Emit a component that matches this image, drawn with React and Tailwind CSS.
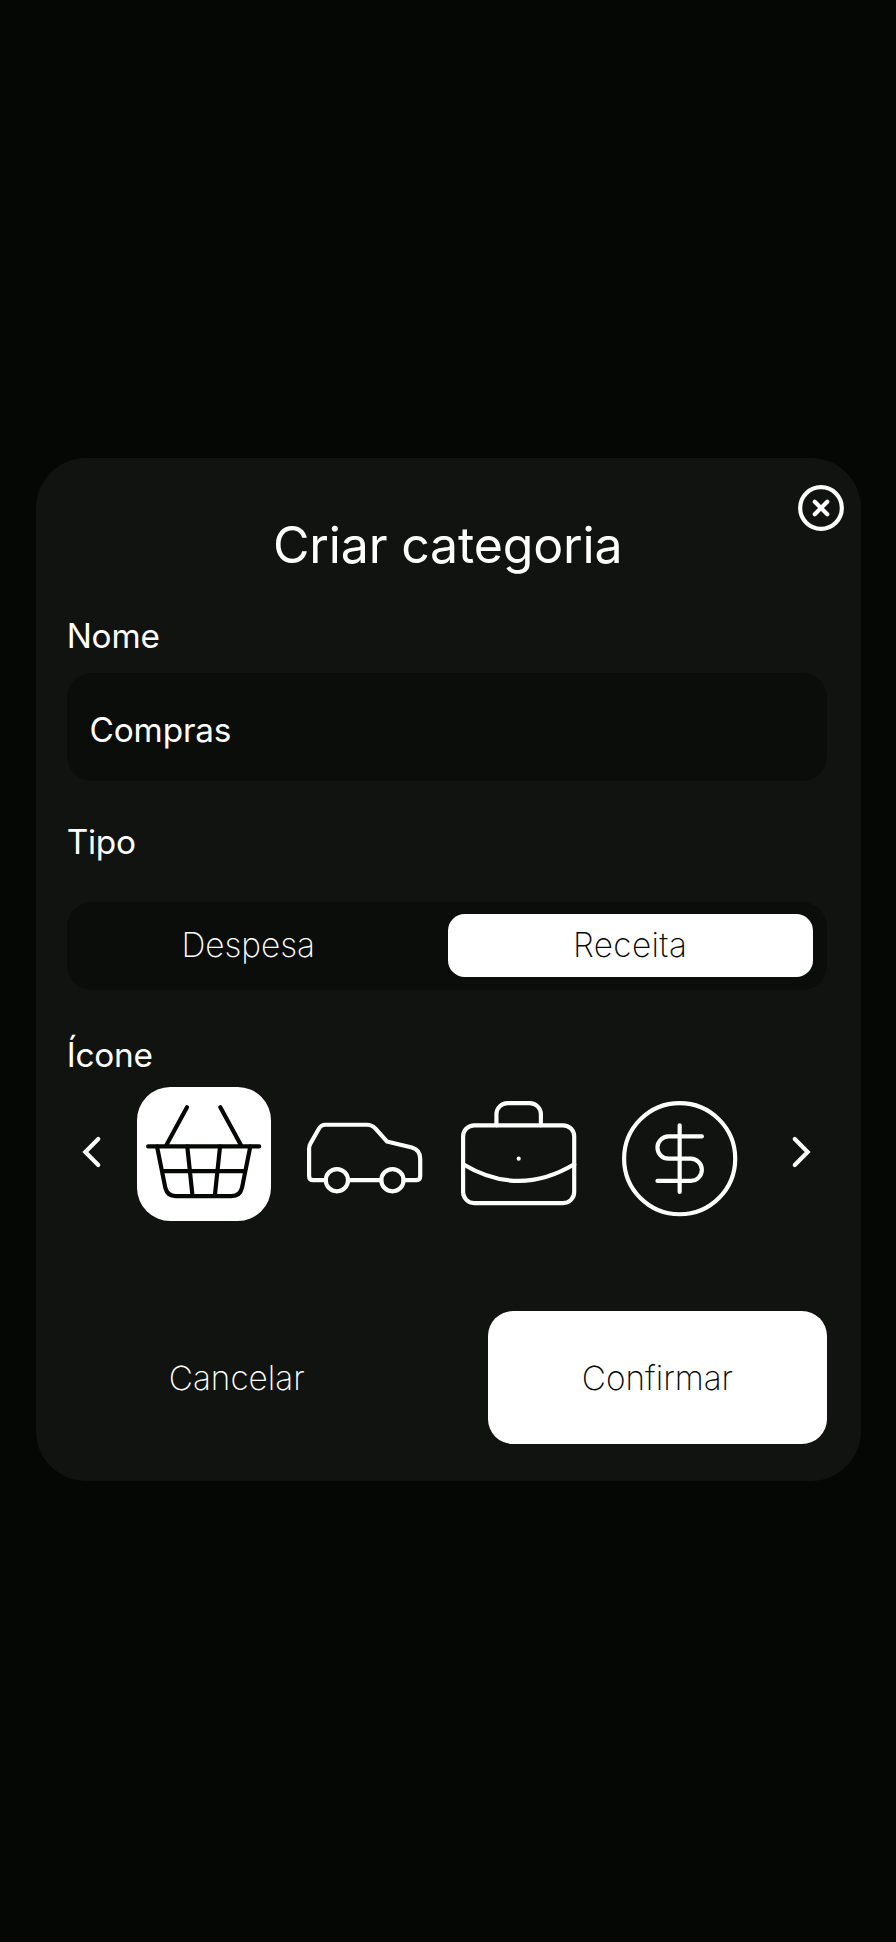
import { CircleX } from "lucide-react";

function Icon({ children, className = "" }) {
  return (
    <svg
      viewBox="0 0 48 48"
      fill="none"
      stroke="currentColor"
      strokeWidth="1.5"
      strokeLinecap="round"
      strokeLinejoin="round"
      className={"h-[133.33px] w-[133.33px] shrink-0 " + className}
    >
      {children}
    </svg>
  );
}

function Chevron({ d, className = "" }) {
  return (
    <svg
      viewBox="0 0 24 24"
      fill="none"
      stroke="currentColor"
      strokeWidth="2"
      strokeLinecap="round"
      className={"h-[50px] w-[50px] shrink-0 " + className}
    >
      <path d={d} />
    </svg>
  );
}

export default function App() {
  return (
    <div className="flex h-[1942px] w-[896px] flex-col bg-[#050704] pt-[458px] pl-[35.5px] font-['Inter',sans-serif] text-[33.33px] leading-[40px] text-white">
      <main className="relative flex h-[1023.4px] w-[825px] flex-col rounded-[50px] bg-[#111310] pr-[33.3px] pl-[31.2px]">
        <button aria-label="Fechar" className="absolute top-[25.3px] right-[14.5px]">
          <CircleX size={50} strokeWidth={2} className="block" />
        </button>

        <h1 className="mt-[56.5px] pl-[1.5px] text-center text-[50px] leading-[60px] tracking-[-0.15px]">Criar categoria</h1>

        <label className="mt-[41.5px] tracking-[-0.2px]">Nome</label>
        <div className="mt-[17px] flex h-[108.3px] items-center rounded-[25px] bg-[#0b0d0a] pt-[5px] pl-[22.9px] tracking-[-0.15px]">
          Compras
        </div>

        <div className="mt-[40.7px] tracking-[-0.2px]">Tipo</div>
        <div className="mt-[40px] flex h-[88px] items-center rounded-[25px] bg-[#0b0d0a] pr-[14.6px] font-extralight">
          <button className="h-[63px] flex-1 pr-[18px] pb-[2px]">Despesa</button>
          <button className="h-[63px] w-[365px] rounded-[16.7px] bg-white pb-[2px] tracking-[0.35px] text-[#050704]">Receita</button>
        </div>

        <div className="mt-[44.6px] tracking-[-0.2px]">Ícone</div>
        <div className="mt-[12.7px] flex h-[134px] items-start">
          <Chevron d="M15 18.2L8.8 12L15 5.8" className="mt-[40px]" />
          <div className="ml-[20.7px] rounded-[33.3px] bg-white text-[#050704]">
            <Icon className="block">
              <path d="M4 21.4H44M18 7.3L10.3 21.4M30 7.3L37.7 21.4" />
              <path d="M7.2 21.4L10.2 36.3Q10.9 39.3 14 39.3H34Q37.1 39.3 37.8 36.3L40.8 21.4M9 30.3H39M18.1 21.4L20 39.3M29.9 21.4L28 39.3" />
            </Icon>
          </div>
          <Icon className="mt-[4.6px] ml-[27.1px]">
            <path d="M10 31.75H5.5Q4 31.75 4 30.2V20.3Q4 19.4 4.5 18.5L7.4 13.4Q8.2 11.8 9.9 11.8H24.8Q26.6 11.8 27.9 13.2L32 17.8L41 20Q44 20.9 44 24V30.2Q44 31.75 42.5 31.75H38M30 31.75H18" />
            <circle cx="14" cy="31.75" r="4" />
            <circle cx="34" cy="31.75" r="4" />
          </Icon>
          <Icon className="mt-[4.6px] ml-[21px]">
            <rect x="4" y="12" width="40" height="28" rx="4" />
            <path d="M16 12V8A4 4 0 0 1 20 4H28A4 4 0 0 1 32 8V12M4 26Q24 38 44 26" />
            <circle cx="24" cy="24" r="0.75" fill="currentColor" stroke="none" />
          </Icon>
          <Icon className="mt-[4.6px] ml-[27.4px]">
            <circle cx="24" cy="24" r="20" />
            <path d="M24 12V36M32 16H20A4 4 0 0 0 20 24H28A4 4 0 0 1 28 32H16" />
          </Icon>
          <Chevron d="M9 18.2L15.2 12L9 5.8" className="mt-[40px] ml-[30.3px]" />
        </div>

        <div className="mt-[89.3px] flex justify-between font-extralight">
          <button className="h-[133.3px] w-[340px] pt-[1px]">Cancelar</button>
          <button className="h-[133.3px] w-[339.6px] rounded-[25px] bg-white pt-[1px] text-[#050704]">Confirmar</button>
        </div>
      </main>
    </div>
  );
}
